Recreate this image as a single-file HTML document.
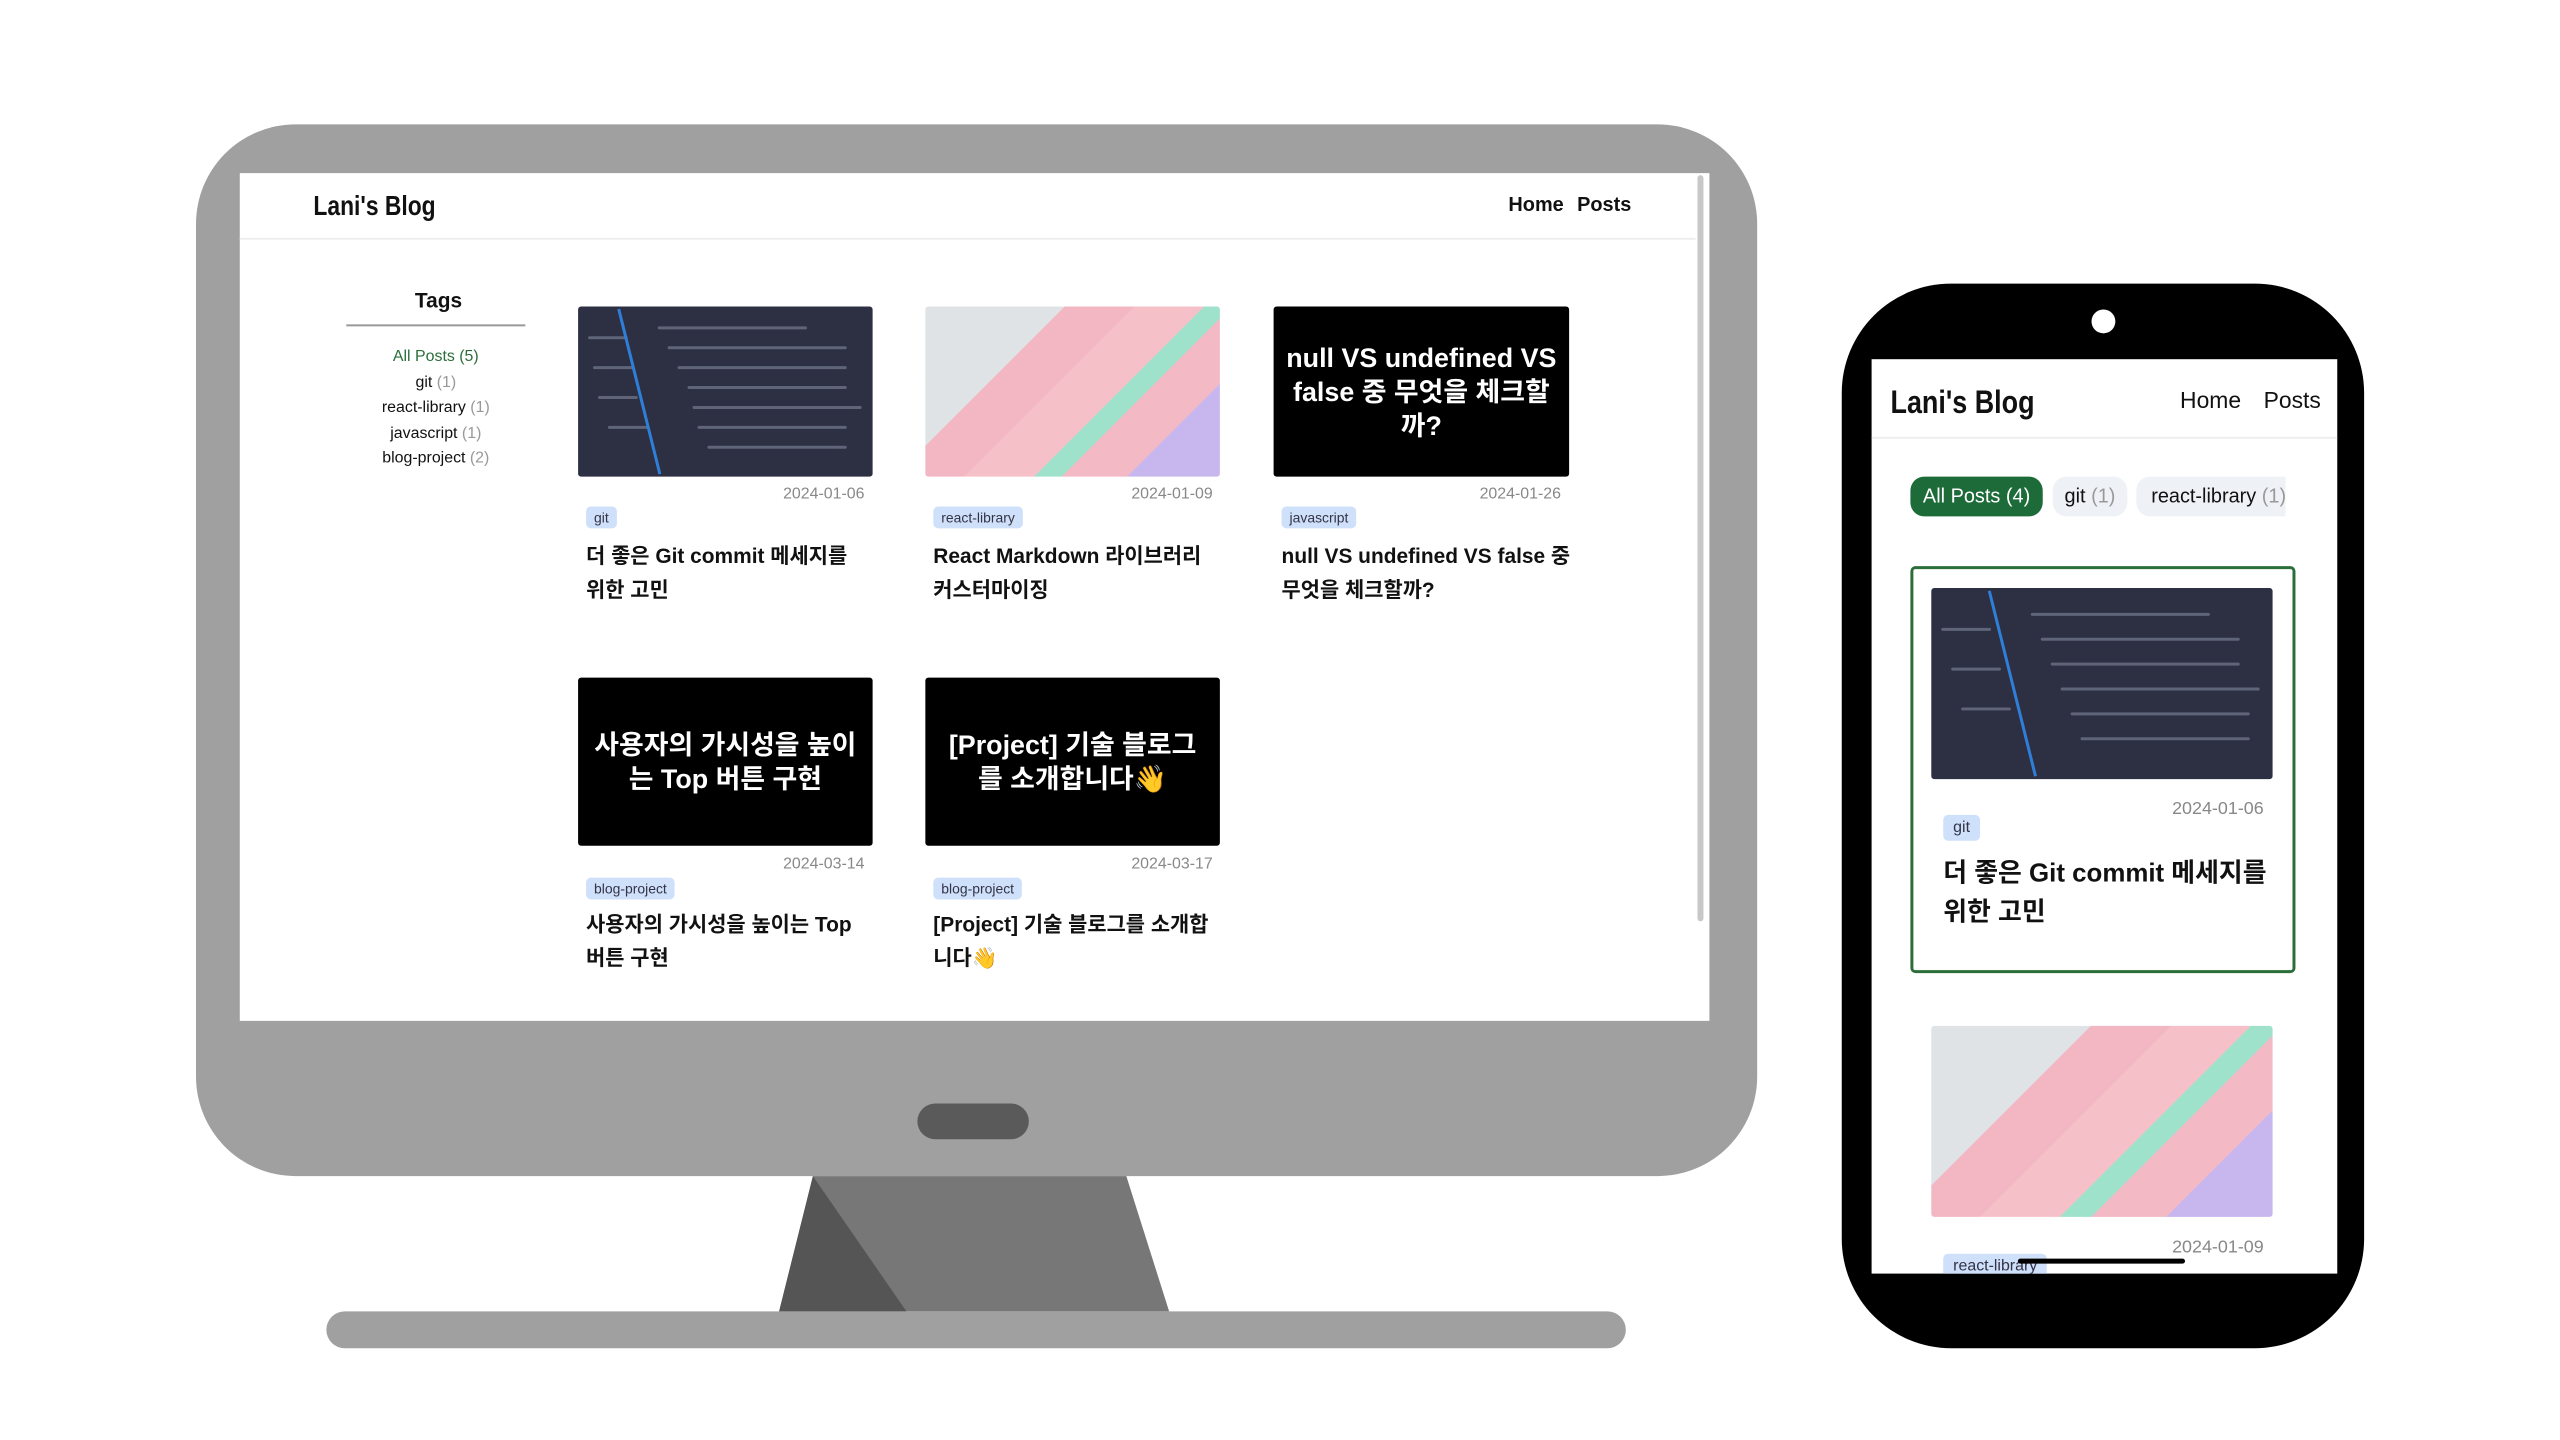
<!DOCTYPE html>
<html><head><meta charset="utf-8"><style>
*{margin:0;padding:0;box-sizing:border-box}
body{width:2560px;height:1440px;background:#fff;position:relative;overflow:hidden;font-family:"Liberation Sans","Noto Sans CJK KR",sans-serif;color:#111}
#w{position:absolute;left:0;top:0;width:2560px;height:1440px;transform:scale(.995);transform-origin:0 0}
.a{position:absolute}
.t{position:absolute;white-space:nowrap;transform-origin:left center}
.cond{transform:scaleX(.82)}
.code{background:#2c3042;overflow:hidden;border-radius:3px}
.code i{position:absolute;height:3px;background:#8a90a8;opacity:.55;border-radius:2px}
.kb{background:linear-gradient(135deg,#dfe3e6 0 30%,#f3b7c4 30% 45%,#f6c0c8 45% 60%,#9ee2cc 60% 66%,#f3b9c4 66% 80%,#c8b6ee 80% 100%);border-radius:3px;overflow:hidden}
.blk{background:#000;color:#fff;font-weight:bold;text-align:center;display:flex;align-items:center;justify-content:center;border-radius:3px}
.chip{position:absolute;background:#cfe0fb;color:#334;border-radius:5px;font-size:14px;padding:3px 8px}
.date{position:absolute;color:#888;font-size:16px}
.ttl{position:absolute;font-weight:bold;font-size:21px;line-height:34px;width:300px}
</style></head><body><div id="w">
<div class="a" style="left:197px;top:125px;width:1569px;height:1057px;background:#a0a0a0;border-radius:100px"></div>
<div class="a" style="left:241px;top:174px;width:1477px;height:852px;background:#fff"></div>
<div class="a" style="left:1706px;top:176px;width:6px;height:750px;background:#c8c8c8;border-radius:3px"></div>
<div class="a" style="left:922px;top:1109px;width:112px;height:36px;background:#5a5a5a;border-radius:18px"></div>
<svg class="a" style="left:0;top:0" width="2560" height="1440"><polygon points="817,1182 1132,1182 1175,1318 783,1318" fill="#777"/><polygon points="817,1182 911,1318 783,1318" fill="#555"/></svg>
<div class="a" style="left:328px;top:1318px;width:1306px;height:37px;background:#a0a0a0;border-radius:19px"></div>
<div class="a" style="left:241px;top:239px;width:1463px;height:2px;background:#eee"></div>
<div class="t cond" style="left:315px;top:191px;font-size:28px;font-weight:bold">Lani's Blog</div>
<div class="t" style="left:1516px;top:195px;font-size:20px;font-weight:bold">Home</div>
<div class="t" style="left:1585px;top:195px;font-size:20px;font-weight:bold">Posts</div>
<div class="t" style="left:417px;top:291px;font-size:21px;font-weight:bold">Tags</div>
<div class="a" style="left:348px;top:326px;width:180px;height:2px;background:#999"></div>
<div class="a" style="left:348px;top:346px;width:180px;text-align:center;font-size:16px;line-height:25.5px">
<div style="color:#2b6e3a">All Posts (5)</div><div>git <span style="color:#999">(1)</span></div><div>react-library <span style="color:#999">(1)</span></div><div>javascript <span style="color:#999">(1)</span></div><div>blog-project <span style="color:#999">(2)</span></div></div>
<div class="a code" style="left:581px;top:308px;width:296px;height:171px">
<i style="left:80px;top:20px;width:150px"></i><i style="left:90px;top:40px;width:180px"></i><i style="left:100px;top:60px;width:170px"></i><i style="left:110px;top:80px;width:160px"></i><i style="left:115px;top:100px;width:170px"></i><i style="left:120px;top:120px;width:150px"></i><i style="left:130px;top:140px;width:140px"></i><i style="left:10px;top:30px;width:40px"></i><i style="left:15px;top:60px;width:40px"></i><i style="left:20px;top:90px;width:40px"></i><i style="left:30px;top:120px;width:40px"></i>
<div class="a" style="left:60px;top:0;width:3px;height:171px;background:#2f7fd8;transform:rotate(-14deg)"></div></div>
<div class="a kb" style="left:930px;top:308px;width:296px;height:171px"></div>
<div class="a blk" style="left:1280px;top:308px;width:297px;height:171px;font-size:27px;line-height:34px">null VS undefined VS<br>false 중 무엇을 체크할<br>까?</div>
<div class="date" style="left:787px;top:488px">2024-01-06</div>
<div class="date" style="left:1137px;top:488px">2024-01-09</div>
<div class="date" style="left:1487px;top:488px">2024-01-26</div>
<div class="chip" style="left:589px;top:509px">git</div>
<div class="chip" style="left:938px;top:509px">react-library</div>
<div class="chip" style="left:1288px;top:509px">javascript</div>
<div class="ttl" style="left:589px;top:543px">더 좋은 Git commit 메세지를<br>위한 고민</div>
<div class="ttl" style="left:938px;top:543px">React Markdown 라이브러리<br>커스터마이징</div>
<div class="ttl" style="left:1288px;top:543px">null VS undefined VS false 중<br>무엇을 체크할까?</div>
<div class="a blk" style="left:581px;top:681px;width:296px;height:169px;font-size:27px;line-height:34px">사용자의 가시성을 높이<br>는 Top 버튼 구현</div>
<div class="a blk" style="left:930px;top:681px;width:296px;height:169px;font-size:27px;line-height:34px">[Project] 기술 블로그<br>를 소개합니다👋</div>
<div class="date" style="left:787px;top:860px">2024-03-14</div>
<div class="date" style="left:1137px;top:860px">2024-03-17</div>
<div class="chip" style="left:589px;top:882px">blog-project</div>
<div class="chip" style="left:938px;top:882px">blog-project</div>
<div class="ttl" style="left:589px;top:913px">사용자의 가시성을 높이는 Top<br>버튼 구현</div>
<div class="ttl" style="left:938px;top:913px">[Project] 기술 블로그를 소개합<br>니다👋</div>
<div class="a" style="left:1851px;top:285px;width:525px;height:1070px;background:#000;border-radius:110px"></div>
<div class="a" style="left:2102px;top:311px;width:24px;height:24px;background:#fff;border-radius:50%"></div>
<div class="a" style="left:1881px;top:361px;width:468px;height:919px;background:#fff;overflow:hidden">
<div class="t cond" style="left:19px;top:24px;font-size:33px;font-weight:bold">Lani's Blog</div>
<div class="t" style="left:310px;top:28px;font-size:23px">Home</div>
<div class="t" style="left:394px;top:28px;font-size:23px">Posts</div>
<div class="a" style="left:0;top:78px;width:468px;height:2px;background:#eee"></div>
<div class="a" style="left:39px;top:118px;width:133px;height:40px;background:#1e6b3a;color:#fff;border-radius:14px;font-size:20px;line-height:40px;text-align:center">All Posts (4)</div>
<div class="a" style="left:182px;top:118px;width:75px;height:40px;background:#eef2f7;border-radius:14px;font-size:20px;line-height:40px;text-align:center">git <span style="color:#999">(1)</span></div>
<div class="a" style="left:266px;top:118px;width:150px;height:40px;background:#eef2f7;border-radius:14px 0 0 14px;font-size:20px;line-height:40px;padding-left:15px;white-space:nowrap;overflow:hidden">react-library <span style="color:#999">(1)</span></div>
<div class="a" style="left:39px;top:208px;width:387px;height:409px;border:3px solid #2b6e3a;border-radius:5px"></div>
<div class="a code" style="left:60px;top:230px;width:343px;height:192px">
<i style="left:100px;top:25px;width:180px"></i><i style="left:110px;top:50px;width:200px"></i><i style="left:120px;top:75px;width:190px"></i><i style="left:130px;top:100px;width:200px"></i><i style="left:140px;top:125px;width:180px"></i><i style="left:150px;top:150px;width:170px"></i><i style="left:10px;top:40px;width:50px"></i><i style="left:20px;top:80px;width:50px"></i><i style="left:30px;top:120px;width:50px"></i>
<div class="a" style="left:80px;top:0;width:3px;height:192px;background:#2f7fd8;transform:rotate(-14deg)"></div></div>
<div class="date" style="left:302px;top:441px;font-size:18px">2024-01-06</div>
<div class="chip" style="left:72px;top:458px;font-size:16px;padding:4px 10px">git</div>
<div class="ttl" style="left:72px;top:497px;font-size:26px;line-height:39px;width:360px">더 좋은 Git commit 메세지를<br>위한 고민</div>
<div class="a kb" style="left:60px;top:670px;width:343px;height:192px"></div>
<div class="date" style="left:302px;top:882px;font-size:18px">2024-01-09</div>
<div class="chip" style="left:72px;top:899px;font-size:16px;padding:4px 10px">react-library</div>
<div class="a" style="left:147px;top:904px;width:168px;height:5px;background:#000;border-radius:3px"></div>
</div>
</div></body></html>
